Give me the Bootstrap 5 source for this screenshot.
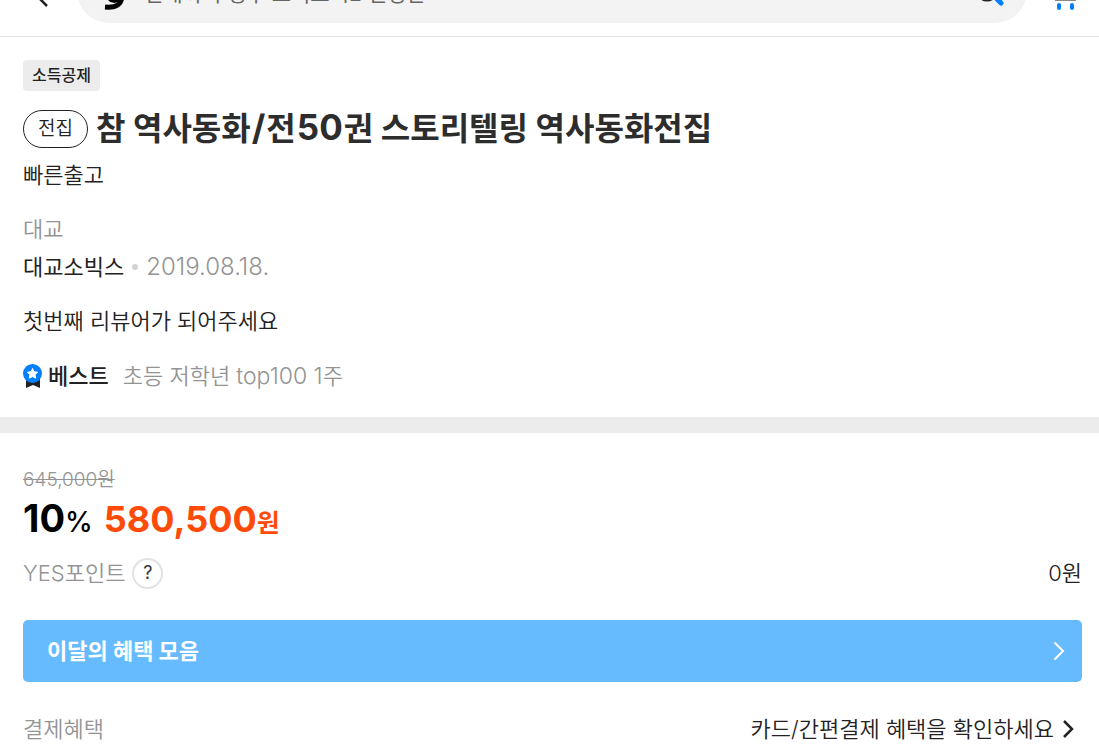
<!DOCTYPE html>
<html lang="ko">
<head>
<meta charset="utf-8">
<meta name="viewport" content="width=device-width, initial-scale=1">
<title>참 역사동화/전50권 스토리텔링 역사동화전집</title>
<link href="https://cdn.jsdelivr.net/npm/bootstrap@5.3.0/dist/css/bootstrap.min.css" rel="stylesheet">
<style>
body{font-family:Inter,"Noto Sans CJK KR",sans-serif;font-size:22px;line-height:38px;font-weight:350;color:#222;background:#fff}
a{color:inherit;text-decoration:none}
.page-x{padding-left:23px;padding-right:17px}
.topbar{height:37px;overflow:hidden;border-bottom:1px solid #e3e4e6;padding:0 22px 13px 32px}
.topbar form{height:64px;border-radius:32px;background:#f3f3f3;margin:0 24px 0 23px;padding:0 21px 0 23px}
.topbar input{font-size:21px;height:40px;line-height:36px;color:#666;background:none;border:0;outline:0;min-width:0;padding:4px 0 0}
.topbar input::placeholder{color:#666;opacity:1}
.summary{padding-top:23px;padding-bottom:22px}
.tag-row{margin-bottom:19px}
.tag-tax{font-size:16px;line-height:31px;font-weight:500;background:#ececec;border-radius:4px;padding:0 9px}
.tag-set{font-size:19px;line-height:36px;border:1px solid #222;border-radius:19px;padding:0 14px}
h1{font-size:32px;line-height:38px;font-weight:700;color:#2d2d2d}
h1 span{font-size:35px;line-height:1;padding:0 1px}
.muted{color:#949494}
.bullet{width:6px;height:6px;border-radius:50%;background:#d3d3d3}
.latin{font-size:24px;line-height:1}
.best{margin-top:17px;column-gap:14px}
.best strong{margin-left:-8px}
.best .rank{font-size:23px;line-height:1}
.divider{height:16px;background:#ececec}
.pricing{padding-top:34px}
.old{font-size:19px;line-height:25px}
.price{line-height:52px;font-weight:700}
.price .num{font-size:38px}
.price .sale .num{font-size:36px}
.price .unit{font-size:25px;font-weight:700}
.price .pct{font-size:28px;font-weight:500}
.sale{color:#ff4b0a;margin-left:11px}
.help{width:31px;height:31px;border:2px solid #e2e2e2;border-radius:50%;background:#fff;font-size:18px;line-height:26px;padding:0;color:#333;margin-left:7px}
.benefit{background:#66bbff;color:#fff;border-radius:5px;height:62px;padding:0 16px 0 24px;font-weight:700}
.benefit,.pay{margin-top:28px}
</style>
</head>
<body>
<header class="topbar d-flex align-items-end">
  <a href="#" aria-label="뒤로" class="d-flex flex-shrink-0"><svg width="22" height="38" viewBox="0 0 22 38"><path d="M15-2L3 9l11 11" transform="translate(1 1)" fill="none" stroke="#222" stroke-width="2.500"/></svg></a>
  <form class="d-flex align-items-center flex-grow-1" onsubmit="return false">
    <svg class="flex-shrink-0" width="28" height="40" viewBox="0 0 28 40"><path d="M9 26c1 5 8 5 11 1" fill="none" stroke="#000" stroke-width="4"/><path d="M22 24C22 33 17 37 5 36" fill="none" stroke="#000" stroke-width="5"/></svg>
    <input class="flex-grow-1 ms-3" type="search" aria-label="검색" placeholder="현재까지 정부 프리드시2 신청한">
    <button class="btn p-0 border-0 d-flex" aria-label="검색"><svg width="30" height="36" viewBox="0 0 30 36"><circle cx="11" cy="17" r="10" fill="none" stroke="#222" stroke-width="3"/><path d="M21 26l4 4" stroke="#0080ff" stroke-width="5" stroke-linecap="round"/></svg></button>
  </form>
  <a href="#" aria-label="장바구니" class="d-flex flex-shrink-0"><svg width="26" height="38" viewBox="0 0 26 38"><path d="M4 15h21" stroke="#888" stroke-width="2"/><rect x="6" y="18" width="4" height="7" rx="2" fill="#0080ff"/><rect x="19" y="18" width="4" height="7" rx="2" fill="#0080ff"/></svg></a>
</header>
<main>
  <section class="page-x summary">
    <div class="d-flex tag-row"><span class="tag-tax">소득공제</span></div>
    <div class="d-flex align-items-center gap-2"><span class="tag-set flex-shrink-0">전집</span><h1 class="m-0">참 역사동화<span>/</span>전<span>50</span>권 스토리텔링 역사동화전집</h1></div>
    <div class="mt-2">빠른출고</div>
    <div class="mt-3 muted">대교</div>
    <div class="d-flex align-items-center gap-2"><a href="#" class="fw-normal">대교소빅스</a><span class="bullet"></span><span class="muted latin">2019.08.18.</span></div>
    <div class="mt-3"><a href="#">첫번째 리뷰어가 되어주세요</a></div>
    <div class="best d-flex align-items-center"><svg width="19" height="24" viewBox="0 0 19 24"><path d="M3 14h14v10l-7-3-7 3z" fill="#222"/><circle cx="9.500" cy="9.500" r="9.500" fill="#0080ff"/><path d="M9.500 4.500l1.600 3.200 3.500.5-2.500 2.500.6 3.500-3.200-1.600-3.200 1.600.6-3.500-2.500-2.500 3.500-.5z" fill="#fff" stroke="#fff" stroke-linejoin="round"/></svg><strong class="fw-medium">베스트</strong><a href="#" class="muted">초등 저학년 <span class="rank">top100 1</span>주</a></div>
  </section>
  <div class="divider"></div>
  <section class="page-x pricing">
    <div class="old muted"><del>645,000원</del></div>
    <div class="price d-flex align-items-baseline"><span class="text-black"><span class="num">10</span><span class="pct">%</span></span><span class="sale"><span class="num">580,500</span><span class="unit">원</span></span></div>
    <div class="d-flex align-items-center mt-1"><span class="muted">YES포인트</span><button class="help" aria-label="YES포인트 안내">?</button><span class="ms-auto">0원</span></div>
    <a href="#" class="benefit d-flex align-items-center justify-content-between"><span>이달의 혜택 모음</span><svg width="14" height="20" viewBox="0 0 14 20"><path d="M3 2l8 8-8 8" fill="none" stroke="#fff" stroke-width="2" stroke-linecap="round"/></svg></a>
    <div class="pay d-flex align-items-center"><span class="muted">결제혜택</span><a href="#" class="ms-auto d-flex align-items-center">카드/간편결제 혜택을 확인하세요<svg class="mx-2" width="12" height="20" viewBox="0 0 12 20"><path d="M2 2l8 8-8 8" fill="none" stroke="#222" stroke-width="2.500"/></svg></a></div>
  </section>
</main>
<script src="https://cdn.jsdelivr.net/npm/bootstrap@5.3.0/dist/js/bootstrap.bundle.min.js"></script>
</body>
</html>
